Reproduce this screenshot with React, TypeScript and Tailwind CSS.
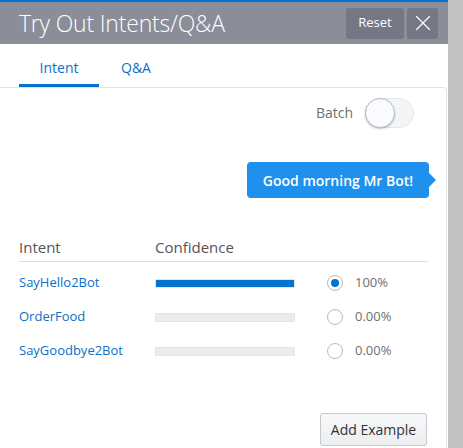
import { X } from "lucide-react";

const rows = [
  { name: "SayHello2Bot", value: 100, label: "100%", selected: true },
  { name: "OrderFood", value: 0, label: "0.00%", selected: false },
  { name: "SayGoodbye2Bot", value: 0, label: "0.00%", selected: false },
];

export default function App() {
  return (
    <div
      className="flex w-[463px] h-[448px] overflow-hidden bg-white"
      style={{ fontFamily: '"Open Sans", "Noto Sans", sans-serif' }}
    >
      <div className="flex flex-col w-[448px] h-full">
        {/* header */}
        <div className="h-[2px] bg-[#0572ce]" />
        <div className="flex items-center h-[42px] bg-[#8b8d99] pl-[19px] pr-[10px]">
          <h1 className="flex-1 text-[23px] leading-none text-white font-light tracking-[-0.2px]">
            Try Out Intents/Q&amp;A
          </h1>
          <button className="h-[31px] w-[58px] rounded-[3px] bg-[#757884] text-white text-[13px] mr-[3px]">
            Reset
          </button>
          <button className="h-[31px] w-[31px] rounded-[3px] bg-[#757884] flex items-center justify-center text-white">
            <X size={26} strokeWidth={1.1} />
          </button>
        </div>

        {/* tabs */}
        <div className="flex items-end h-[43px] pl-[19px] text-[14px] text-[#0b6fc7]">
          <div className="w-[80px] h-full flex flex-col items-center justify-end">
            <span className="pb-[6px]">Intent</span>
            <div className="h-[3px] w-full bg-[#0572ce]" />
          </div>
          <div className="w-[74px] h-full flex flex-col items-center justify-end">
            <span className="pb-[9px]">Q&amp;A</span>
          </div>
        </div>

        {/* card */}
        <div className="flex-1 flex flex-col border-t border-r border-[#dde3ea] rounded-tr-[4px] mr-[1px]">
          <div className="flex items-center justify-end h-[48px] pr-[32px] pt-[1px]">
            <span className="text-[14px] text-[#6f6f6f] mr-[12px]">Batch</span>
            <div className="relative w-[49px] h-[30px] rounded-full bg-[#f4f5f7] border border-[#e3e6ea]">
              <div className="absolute left-[-1px] top-[-1px] w-[30px] h-[30px] rounded-full bg-[#fafbfc] border-[1.5px] border-[#b9bec6] shadow-[0_1px_2px_rgba(0,0,0,0.25)]" />
            </div>
          </div>

          <div className="flex justify-end pr-[17px] mt-[26px]">
            <div className="relative flex items-center justify-center w-[182px] h-[36px] rounded-[4px] bg-[#1e90ed] text-white text-[14px] font-semibold">
              Good morning Mr Bot!
              <div className="absolute right-[-7px] top-[11px] w-0 h-0 border-y-[7px] border-y-transparent border-l-[7px] border-l-[#1e90ed]" />
            </div>
          </div>

          {/* results table */}
          <div className="mx-[19px] mt-[36px] w-[409px]">
            <div className="flex items-center h-[28px] border-b border-[#d9dfe5] text-[15px] text-[#555]">
              <span className="w-[136px]">Intent</span>
              <span>Confidence</span>
            </div>
            {rows.map((r) => (
              <div key={r.name} className="flex items-center h-[34px] text-[13px]">
                <span className="w-[136px] text-[#0b6fc7] pt-[8px]">{r.name}</span>
                <div className="w-[140px] h-[9px] rounded-[1px] bg-[#ececec] border border-[#e4e4e4] overflow-hidden mt-[8px]">
                  <div className="h-full bg-[#0572ce]" style={{ width: `${r.value}%` }} />
                </div>
                <div className="ml-[32px] mt-[8px] w-[16px] h-[16px] rounded-full border border-[#b6bcc4] bg-white flex items-center justify-center">
                  {r.selected && <div className="w-[8px] h-[8px] rounded-full bg-[#0572ce]" />}
                </div>
                <span className="ml-[12px] pt-[8px] text-[#6f6f6f]">{r.label}</span>
              </div>
            ))}
          </div>

          <div className="flex-1" />
          <div className="flex justify-end pr-[19px] pb-[2px]">
            <button className="w-[107px] h-[33px] rounded-[3px] border border-[#c4c8cc] bg-gradient-to-b from-[#f7f8f9] to-[#eceef0] text-[14px] text-[#333]">
              Add Example
            </button>
          </div>
        </div>
      </div>
      <div className="w-[15px] h-full bg-[#c1c1c1]" />
    </div>
  );
}
